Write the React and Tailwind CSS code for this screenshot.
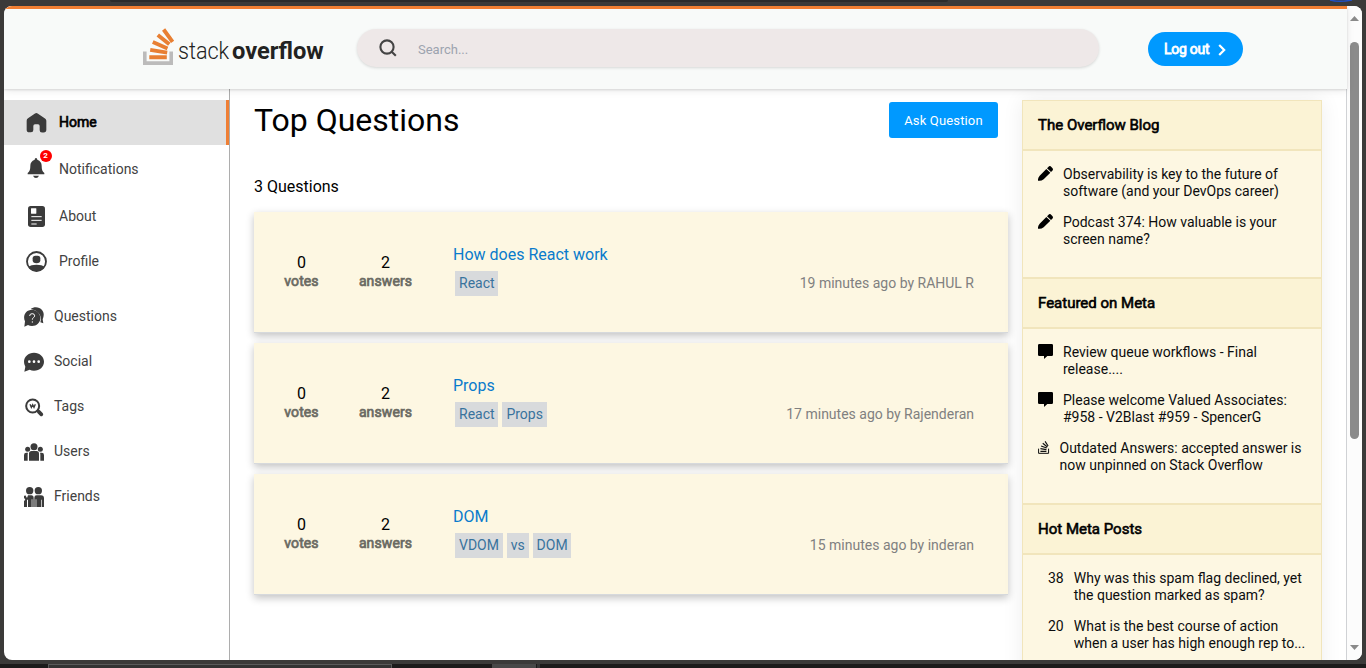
import React from "react";

const ink = "#3b3b3b";

const HomeIcon = () => (
  <svg width="21" height="21" viewBox="0 0 63 63" className="shrink-0">
    <path d="M27 4.500q4-3 8 0l22 15q4 3 4 7v27q0 8-8 8h-5q-7 0-7-7V42q0-5-5-5h-9q-5 0-5 5v12q0 7-7 7h-5q-8 0-8-8V26q0-4 4-7z" fill={ink} />
  </svg>
);

const BellIcon = () => (
  <svg width="18" height="22" viewBox="0 0 54 66" className="shrink-0">
    <path d="M27 3q4 0 4 5c9 3 13 10 13 18 0 12 2 17 8 22v4H2v-4c6-5 8-10 8-22 0-8 4-15 13-18q0-5 4-5zM18 56h18q-3 7-9 7t-9-7z" fill={ink} />
  </svg>
);

const AboutIcon = () => (
  <svg width="17" height="21" viewBox="0 0 51 63" className="shrink-0">
    <rect x="0" y="0" width="51" height="63" rx="8" fill={ink} />
    <rect x="9" y="7" width="16" height="16" rx="1" fill="#fff" />
    <path d="M10 32h31M10 43h31M10 54h16" stroke="#fff" strokeWidth="3" />
  </svg>
);

const ProfileIcon = () => (
  <svg width="21" height="21" viewBox="0 0 63 63" className="shrink-0">
    <circle cx="31.500" cy="31.500" r="28.500" fill="#fff" stroke={ink} strokeWidth="5.500" />
    <path d="M20 22q0-8 8-8h7q8 0 8 8v6q0 9-11.500 9T20 28z" fill={ink} />
    <path d="M8 48q6-7 23.500-7T55 48q-8 13-23.500 13T8 48z" fill={ink} />
  </svg>
);

const QuestionsIcon = () => (
  <svg width="20" height="20" viewBox="0 0 60 60" className="shrink-0">
    <path d="M20 6C30-2 46-1 54 9c7 9 6 18 2 28l2 12-9-3c5-16-2-35-29-40z" fill={ink} />
    <path d="M24 8c14 0 25 11 25 25S38 57 24 57q-7 0-12-3L1 59l2-16C-5 26 6 8 24 8z" fill={ink} />
    <path d="M17 27q0-7 7.500-7t7.500 6.500c0 5-7 5-7 11.500M25 43v4" fill="none" stroke="#fff" strokeWidth="3" />
  </svg>
);

const SocialIcon = () => (
  <svg width="20" height="20" viewBox="0 0 60 60" className="shrink-0">
    <path d="M30 2c17 0 30 12 30 27S47 56 30 56q-7 0-13-3L1 59l3-15Q0 37 0 29C0 14 13 2 30 2z" fill={ink} />
    <circle cx="16" cy="29" r="4" fill="#fff" /><circle cx="30" cy="29" r="4" fill="#fff" /><circle cx="44" cy="29" r="4" fill="#fff" />
  </svg>
);

const TagsIcon = () => (
  <svg width="20" height="20" viewBox="0 0 60 60" className="shrink-0">
    <circle cx="26" cy="27" r="19.500" fill="none" stroke={ink} strokeWidth="6" />
    <path d="M38 40l5 3" stroke={ink} strokeWidth="5" />
    <path d="M44 44l8 8" stroke={ink} strokeWidth="11" strokeLinecap="round" />
    <path d="M18 22l4 9 4-8 4 8 4-9" fill="none" stroke={ink} strokeWidth="4" />
  </svg>
);

const UsersIcon = () => (
  <svg width="20" height="20" viewBox="0 0 60 60" className="shrink-0" fill={ink}>
    <circle cx="30" cy="14" r="10.500" /><circle cx="11" cy="22" r="7.500" /><circle cx="49" cy="22" r="7.500" />
    <path d="M15 56V35q0-8 8-8h14q8 0 8 8v21zM0 56V39q0-7 7-7h5q-1 3-1 6v18zM60 56V39q0-7-7-7h-5q1 3 1 6v18z" />
  </svg>
);

const FriendsIcon = () => (
  <svg width="20" height="20" viewBox="0 0 60 60" className="shrink-0" fill={ink}>
    <circle cx="17" cy="11" r="11" /><circle cx="43" cy="11" r="11" />
    <path d="M0 60V42l4-4-4-6v-5l4-2 5 8 3-8h10q7 0 7 8v27h-4V37h-2v23H12V38H9v22zM31 60V32q0-7 7-7h13q9 0 9 9v26h-6V38h-2v22H37V37h-2v23z" />
  </svg>
);

const Pencil = () => (
  <svg width="15" height="15" viewBox="0 0 45 45" className="shrink-0">
    <path d="M31 3q3-4 7-2l5 5q4 4 0 8l-4 4-12-11zM25 9l12 11-20 20Q9 46 0 44q-1-8 5-15z" />
  </svg>
);

const Bubble = () => (
  <svg width="15" height="15" viewBox="0 0 45 45" className="shrink-0">
    <path d="M4 0h37q4 0 4 4v28q0 4-4 4H28l-10 9v-9H4q-4 0-4-4V4q0-4 4-4z" />
  </svg>
);

const SmallStack = () => (
  <svg width="11.500" height="13" viewBox="0 0 34 39" className="shrink-0 translate-y-px" fill="none" stroke="#111">
    <path d="M1.500 23v14h30V23" strokeWidth="3" />
    <path d="M7 31h18M7 23l18 3M9 15l17 6M14 7l14 11M21 1l9 14" strokeWidth="3.500" />
  </svg>
);

const Logo = () => (
  <div className="flex h-10">
    <svg width="32" height="40" viewBox="0 0 32 40" className="shrink-0">
      <path d="M1.800 23.500v11.600h26.400V23.500" fill="none" stroke="#bcbbbb" strokeWidth="3.600" />
      <path d="M6.300 29.200h17.500M7.200 21.800l17 2.800M9.800 14l14.700 6.500M14.800 7l11.500 9.300M20.600 1.500l9 12.300" stroke="#e87f33" strokeWidth="3.900" fill="none" />
    </svg>
    <span className="ml-[3px] mt-[6.500px] w-[54px] origin-left scale-x-[0.9] text-[24px] font-light leading-[32px] text-[#222]">stack</span>
    <span className="mt-[6.500px] w-[95px] origin-left scale-x-[0.985] text-[24px] font-bold leading-[32px] text-[#222]">overflow</span>
  </div>
);

const upper = [
  { label: "Notifications", icon: <BellIcon />, badge: 2 },
  { label: "About", icon: <AboutIcon /> },
  { label: "Profile", icon: <ProfileIcon /> },
];
const lower = [
  { label: "Questions", icon: <QuestionsIcon /> },
  { label: "Social", icon: <SocialIcon /> },
  { label: "Tags", icon: <TagsIcon /> },
  { label: "Users", icon: <UsersIcon /> },
  { label: "Friends", icon: <FriendsIcon /> },
];

const questions = [
  { title: "How does React work", tags: ["React"], meta: "19 minutes ago by RAHUL R" },
  { title: "Props", tags: ["React", "Props"], meta: "17 minutes ago by Rajenderan" },
  { title: "DOM", tags: ["VDOM", "vs", "DOM"], meta: "15 minutes ago by inderan" },
];

const widgets = [
  {
    title: "The Overflow Blog",
    items: [
      { mark: <Pencil />, lines: ["Observability is key to the future of", "software (and your DevOps career)"] },
      { mark: <Pencil />, lines: ["Podcast 374: How valuable is your", "screen name?"] },
    ],
  },
  {
    title: "Featured on Meta",
    items: [
      { mark: <Bubble />, lines: ["Review queue workflows - Final", "release...."] },
      { mark: <Bubble />, lines: ["Please welcome Valued Associates:", "#958 - V2Blast #959 - SpencerG"] },
      { mark: <SmallStack />, lines: ["Outdated Answers: accepted answer is", "now unpinned on Stack Overflow"] },
    ],
  },
  {
    title: "Hot Meta Posts",
    items: [
      { count: 38, lines: ["Why was this spam flag declined, yet", "the question marked as spam?"] },
      { count: 20, clip: true, lines: ["What is the best course of action", "when a user has high enough rep to..."] },
    ],
  },
];

function Header() {
  return (
    <header className="relative z-10 flex h-[83px] shrink-0 items-start border-t-3 border-[#f17f33] bg-[#f8faf9] shadow-[0_1px_2px_rgba(0,0,0,0.12),0_2px_8px_rgba(0,0,0,0.08)]">
      <div className="ml-[139px] mt-[19px] flex w-[184px]"><Logo /></div>
      <div className="ml-[30px] mt-5 flex h-[38px] w-[742px] items-center rounded-full bg-[#eee8e8] pl-[22px] shadow-[0_1px_3px_rgba(0,0,0,0.14)]">
        <svg width="18" height="18" viewBox="0 0 18 18" fill="none" stroke="#444" strokeWidth="2.100">
          <circle cx="8" cy="8" r="6.600" /><path d="M12.700 12.700l4.100 4" />
        </svg>
        <span className="ml-[21px] mt-1 text-[13px] text-[#9ca3af]">Search...</span>
      </div>
      <button className="ml-[49px] mt-[23px] flex h-[34px] w-[95px] items-center rounded-full bg-[#0099ff] pl-4 text-[14px] text-white">
        <span className="tracking-[-0.25px] [-webkit-text-stroke:0.8px_white]">Log out</span>
        <svg width="8" height="12" viewBox="0 0 8 12" fill="none" stroke="#fff" strokeWidth="2.200" className="ml-[9px] mt-0.5"><path d="M1.200 1l5 5-5 5" /></svg>
      </button>
    </header>
  );
}

function Sidebar() {
  return (
    <nav className="w-[226px] shrink-0 border-r border-[#adadad] pt-[11px] text-[14px] text-[#424242]">
      <div className="flex h-[45px] items-center border-r-3 border-[#ef7f35] bg-[#e0e0e0] text-black">
        <span className="flex w-[55px] pl-[22px]"><HomeIcon /></span>
        <span className="[-webkit-text-stroke:0.7px_black]">Home</span>
      </div>
      <ul>
        {upper.map((n, i) => (
          <li key={n.label} className={"flex items-center " + (i === 0 ? "h-12" : i === 1 ? "h-[46px] pt-px" : "h-[45px]")}>
            <span className={"flex w-[55px] justify-center " + (i === 0 ? "-mt-0.5 pl-[9px]" : "pl-[10px]")}>
              <span className="relative flex">
                {n.icon}
                {n.badge && (
                  <span className="absolute -top-[7px] left-[12.500px] flex size-3 items-center justify-center rounded-full bg-[#f00] text-[8px] font-bold leading-none text-white">{n.badge}</span>
                )}
              </span>
            </span>
            {n.label}
          </li>
        ))}
      </ul>
      <ul className="pt-[10px]">
        {lower.map((n) => (
          <li key={n.label} className="flex h-[45px] items-center">
            <span className="flex w-[50px] pl-5">{n.icon}</span>
            {n.label}
          </li>
        ))}
      </ul>
    </nav>
  );
}

function Stat({ value, label, className }) {
  return (
    <div className={"flex flex-col items-center " + className}>
      <span className="text-[16px] leading-[19px] text-black">{value}</span>
      <span className="text-[14px] leading-[19px] tracking-[0.1px] text-[#6a6a62] [-webkit-text-stroke:0.7px_#6a6a62]">{label}</span>
    </div>
  );
}

function Question({ q }) {
  return (
    <article className="flex h-[121px] border-b border-[#d6d9dc] bg-[#fdf7e2] shadow-[0_3px_8px_rgba(0,0,0,0.24)]">
      <Stat value={0} label="votes" className="ml-[17px] mt-[41px] w-[61px]" />
      <Stat value={2} label="answers" className="ml-[23px] mt-[41px] w-[61px]" />
      <div className="ml-[37px] mt-[33px] flex grow flex-col">
        <h3 className="text-[16px] leading-[19px] text-[#0a7bcc]">{q.title}</h3>
        <div className="mt-[7px] flex items-center gap-1 pl-0.5">
          {q.tags.map((t) => (
            <span key={t} className="h-[25px] bg-[#d8dadc] pl-1 pr-[3.8px] text-[14px] leading-[25px] text-[#39739d]">{t}</span>
          ))}
          <span className="ml-auto mr-[34px] text-[14px] text-[#808080]">{q.meta}</span>
        </div>
      </div>
    </article>
  );
}

function Widget({ w, first }) {
  return (
    <section>
      <h4 className={"flex items-center border-b-2 border-[#f1e5bc] bg-[#fbf3d5] pl-[15px] text-[15px] text-black [-webkit-text-stroke:0.6px_black] " + (first ? "h-[50px]" : "h-[52px] border-t-2")}>
        {w.title}
      </h4>
      <div className="flex flex-col gap-[14px] pb-[29px] pl-[15px] pt-[15px]">
        {w.items.map((it) => (
          <div key={it.lines[0]} className="flex h-[34px] gap-[10px] text-[14px] leading-[17px] text-[#0c0d0e]">
            {it.count ? <span className="pl-[10px]">{it.count}</span> : <span className="flex">{it.mark}</span>}
            <p className={"whitespace-nowrap " + (it.clip ? "h-[33px] overflow-hidden" : "")}>{it.lines[0]}<br />{it.lines[1]}</p>
          </div>
        ))}
      </div>
    </section>
  );
}

function Scrollbar() {
  return (
    <div className="flex w-[15px] shrink-0 flex-col items-center bg-[#fcfcfc] pb-[10px] pt-[10px]">
      <svg width="9" height="5" viewBox="0 0 9 5"><path d="M4.500 0L9 5H0z" fill="#8a8a8a" /></svg>
      <div className="mt-[21px] h-[397px] w-[9px] rounded-full bg-[#8b8b8b]" />
      <svg width="9" height="5" viewBox="0 0 9 5" className="mt-auto"><path d="M4.500 5L9 0H0z" fill="#8a8a8a" /></svg>
    </div>
  );
}

export default function App() {
  return (
    <div className="flex h-[668px] w-[1366px] flex-col overflow-hidden bg-[#3b3a39] font-[Roboto,sans-serif]">
      <div className="flex h-1.5 shrink-0 items-start pl-[110px]">
        <span className="h-0.5 w-[838px] rounded-b bg-[#2b2b2b]" />
        <svg width="24" height="3" viewBox="0 0 24 3" className="ml-[381px]"><path d="M1 0q9 2.500 22 0" fill="none" stroke="#1f4fc4" strokeWidth="1.500" /></svg>
      </div>
      <div className="mx-1 flex h-[654px] shrink-0 overflow-hidden rounded-[8px] bg-white">
        <div className="flex w-[1343px] flex-col">
          <Header />
          <div className="flex min-h-0 grow overflow-hidden border-r border-[#d0d2d5]">
            <Sidebar />
            <main className="w-[778px] shrink-0 pl-6">
              <div className="flex h-[62px] items-start justify-between pr-[10px] pt-[13px]">
                <h1 className="text-[32px] leading-[36px] text-black">Top Questions</h1>
                <button className="h-9 w-[109px] rounded-[3px] bg-[#0099ff] pt-0.5 text-[13px] tracking-[0.15px] text-white">Ask Question</button>
              </div>
              <p className="mt-[26px] text-[16px] leading-[19px] text-black">3 Questions</p>
              <div className="mt-4 flex w-[754px] flex-col gap-[10px]">
                {questions.map((q) => <Question key={q.title} q={q} />)}
              </div>
            </main>
            <aside className="ml-[14px] mt-[11px] h-[700px] w-[300px] shrink-0 border border-[#f1e5bc] bg-[#fdf7e2] shadow-[0_0_20px_rgba(0,0,0,0.07)]">
              {widgets.map((w, i) => <Widget key={w.title} w={w} first={i === 0} />)}
            </aside>
          </div>
        </div>
        <Scrollbar />
      </div>
      <div className="mt-1 flex h-1 shrink-0 bg-[#1c1b1b] pl-12">
        <span className="w-[344px] border border-b-0 border-[#5a5a5a] bg-[#333]" />
        <span className="ml-[100px] w-11 bg-[#484848]" />
        <span className="ml-px w-[3px] bg-[#333]" />
      </div>
    </div>
  );
}
